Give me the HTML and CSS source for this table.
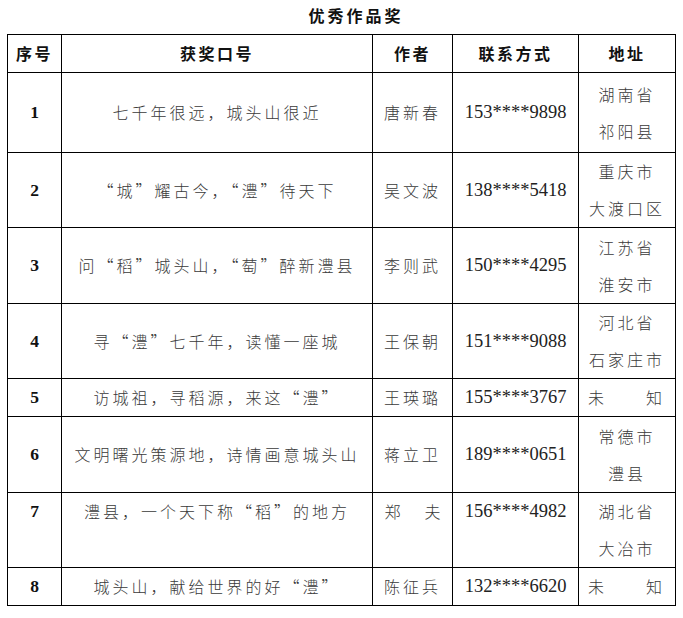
FILE: index.html
```html
<!DOCTYPE html>
<html lang="zh-CN">
<head>
<meta charset="utf-8">
<title>优秀作品奖</title>
<link rel="stylesheet" href="styles.css">
</head>
<body>
<div class="page">
  <div class="title">优秀作品奖</div>
  <table class="award">
    <colgroup>
      <col class="c-no"><col class="c-slogan"><col class="c-author"><col class="c-phone"><col class="c-addr">
    </colgroup>
    <thead>
      <tr class="head">
        <th>序号</th><th>获奖口号</th><th>作者</th><th>联系方式</th><th>地址</th>
      </tr>
    </thead>
    <tbody>
      <tr class="r1">
        <td class="no">1</td><td class="txt">七千年很远，城头山很近</td><td class="txt">唐新春</td><td class="ph">153****9898</td><td class="txt">湖南省<br>祁阳县</td>
      </tr>
      <tr class="r2">
        <td class="no">2</td><td class="txt">“城”耀古今，“澧”待天下</td><td class="txt">吴文波</td><td class="ph">138****5418</td><td class="txt">重庆市<br>大渡口区</td>
      </tr>
      <tr class="r3">
        <td class="no">3</td><td class="txt">问“稻”城头山，“萄”醉新澧县</td><td class="txt">李则武</td><td class="ph">150****4295</td><td class="txt">江苏省<br>淮安市</td>
      </tr>
      <tr class="r4">
        <td class="no">4</td><td class="txt">寻“澧”七千年，读懂一座城</td><td class="txt">王保朝</td><td class="ph">151****9088</td><td class="txt">河北省<br>石家庄市</td>
      </tr>
      <tr class="r5">
        <td class="no">5</td><td class="txt">访城祖，寻稻源，来这“澧”</td><td class="txt">王瑛璐</td><td class="ph">155****3767</td><td class="txt"><span class="dist wide">未知</span></td>
      </tr>
      <tr class="r6">
        <td class="no">6</td><td class="txt">文明曙光策源地，诗情画意城头山</td><td class="txt">蒋立卫</td><td class="ph">189****0651</td><td class="txt">常德市<br>澧县</td>
      </tr>
      <tr class="r7">
        <td class="no">7</td><td class="txt">澧县，一个天下称“稻”的地方</td><td class="txt"><span class="dist">郑夫</span></td><td class="ph">156****4982</td><td class="txt">湖北省<br>大冶市</td>
      </tr>
      <tr class="r8">
        <td class="no">8</td><td class="txt">城头山，献给世界的好“澧”</td><td class="txt">陈征兵</td><td class="ph">132****6620</td><td class="txt"><span class="dist wide">未知</span></td>
      </tr>
    </tbody>
  </table>
</div>
</body>
</html>
```
FILE: styles.css
```css
html, body {
  margin: 0;
  padding: 0;
  background: #ffffff;
}
.page {
  padding: 0 0 0 7px;
  font-family: "Noto Sans CJK SC", "Noto Sans", sans-serif;
  color: #000;
}
.title {
  width: 668px;
  height: 34px;
  box-sizing: border-box;
  padding: 4px 0 0 30px;
  text-align: center;
  font-size: 16px;
  line-height: 22px;
  font-weight: 700;
  letter-spacing: 3px;
  color: #111;
}
.award {
  border-collapse: collapse;
  table-layout: fixed;
  width: 668px;
}
.c-no { width: 54px; }
.c-slogan { width: 311px; }
.c-author { width: 80px; }
.c-phone { width: 126px; }
.c-addr { width: 97px; }
.award th, .award td {
  border: 1px solid #000;
  padding: 0;
  text-align: center;
  vertical-align: middle;
  line-height: 37px;
}
.award th {
  height: 37px;
  font-size: 16px;
  font-weight: 700;
  letter-spacing: 2.5px;
  color: #111;
}
.txt {
  font-size: 16px;
  font-weight: 300;
  letter-spacing: 3px;
  color: #3a3a3a;
  white-space: nowrap;
}
.no {
  font-family: "Liberation Serif", serif;
  font-weight: 700;
  font-size: 17.5px;
  color: #111;
}
.ph {
  font-family: "Liberation Serif", serif;
  font-size: 18.5px;
  color: #222;
}
.dist {
  display: block;
  width: 56px;
  margin: 0 auto;
  text-align: justify;
  text-align-last: justify;
  letter-spacing: 0;
}
.dist.wide {
  width: 74px;
  margin: 0 0 0 9px;
}
.r1 { height: 80px; }
.r2 { height: 75px; }
.r3 { height: 76px; }
.r4 { height: 73px; }
.r5 { height: 37px; }
.r6 { height: 76px; }
.r7 { height: 74px; }
.r8 { height: 37px; }
.r7 td { vertical-align: top; }
```
